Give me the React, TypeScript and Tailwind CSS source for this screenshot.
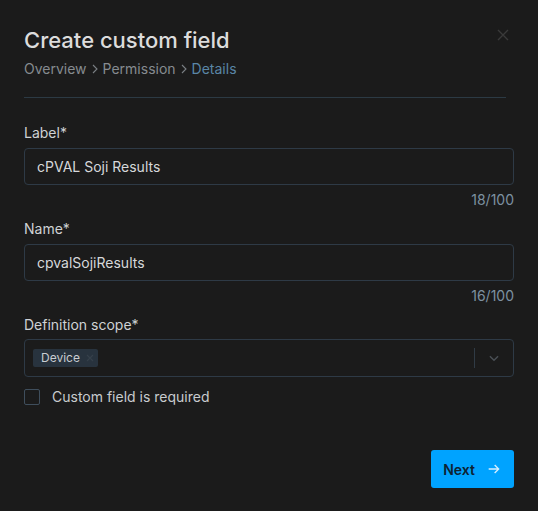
import React from "react";

const FONT = { fontFamily: "Inter, 'Noto Sans', sans-serif" };

interface TextFieldProps {
  label: string;
  value: string;
  max: number;
}

const TextField: React.FC<TextFieldProps> = ({ label, value, max }) => {
  return (
    <div className="flex flex-col">
      <label className="text-[14px] leading-5 text-[#cfd2d4]">{label}</label>
      <div className="mt-[5px] h-[37px] flex items-center rounded-[4px] border border-[#2e3a46] px-3 text-[14px] text-[#d6d8da]">
        {value}
      </div>
      <div className="mt-[5px] text-right text-[14px] leading-5 text-[#7d91a1]">
        {value.length}/{max}
      </div>
    </div>
  );
};

const Crumb = () => (
  <svg width="6" height="10" viewBox="0 0 6 10" fill="none" className="mx-[5px] text-[#7a7f84]">
    <path d="M1 1l4 4-4 4" stroke="currentColor" strokeWidth="1.1" />
  </svg>
);

export default function App() {
  return (
    <div
      className="w-[538px] h-[511px] bg-[#1b1b1b] px-6 pt-6 relative"
      style={FONT}
    >
      <button className="absolute right-[29px] top-[29px] text-[#3a3a3a]">
        <svg width="12" height="12" viewBox="0 0 12 12" fill="none">
          <path d="M1 1L11 11M11 1L1 11" stroke="currentColor" strokeWidth="1.4" />
        </svg>
      </button>

      <h1 className="text-[22px] leading-8 font-medium text-[#dcdcdc]">
        Create custom field
      </h1>
      <div className="mt-[3px] flex items-center text-[14px] leading-5 text-[#868b90]">
        <span>Overview</span>
        <Crumb />
        <span>Permission</span>
        <Crumb />
        <span className="text-[#5a86a6]">Details</span>
      </div>
      <div className="mt-[18px] mr-2 h-px bg-[#2c3a44]" />

      <div className="mt-[25px]">
        <TextField label="Label*" value="cPVAL Soji Results" max={100} />
      </div>
      <div className="mt-[9px]">
        <TextField label="Name*" value="cpvalSojiResults" max={100} />
      </div>

      <div className="mt-[9px] flex flex-col">
        <label className="text-[14px] leading-5 text-[#cfd2d4]">
          Definition scope*
        </label>
        <div className="mt-1 h-[38px] flex items-center rounded-[4px] border border-[#2e3a46] pl-2">
          <div className="flex items-center h-[18px] rounded-[2px] bg-[#28333e] pl-2 pr-[4px] gap-[6px]">
            <span className="text-[12px] text-[#c9cdd1]">Device</span>
            <svg width="8" height="8" viewBox="0 0 8 8" fill="none" className="text-[#35404a]">
              <path d="M1 1L7 7M7 1L1 7" stroke="currentColor" strokeWidth="1.2" />
            </svg>
          </div>
          <div className="flex-1" />
          <div className="w-px h-[20px] bg-[#303b45]" />
          <div className="w-[38px] flex justify-center text-[#4a4f55]">
            <svg width="14" height="14" viewBox="0 0 24 24" fill="none">
              <path d="M5 9l7 7 7-7" stroke="currentColor" strokeWidth="2.4" />
            </svg>
          </div>
        </div>
      </div>

      <label className="mt-[10px] flex items-center gap-3">
        <span className="w-4 h-4 rounded-[2px] border border-[#3f4e5c]" />
        <span className="text-[14px] leading-5 text-[#c8cbce]">
          Custom field is required
        </span>
      </label>

      <div className="mt-[43px] flex justify-end">
        <button className="h-[38px] w-[83px] rounded-[3px] bg-[#00a3ff] flex items-center justify-center gap-[11px]">
          <span className="text-[14px] font-semibold text-[#0e2233]">Next</span>
          <svg width="16" height="16" viewBox="0 0 24 24" fill="none" className="text-[#d8efff]">
            <path d="M4 12h15M13 6l6 6-6 6" stroke="currentColor" strokeWidth="2" />
          </svg>
        </button>
      </div>
    </div>
  );
}
